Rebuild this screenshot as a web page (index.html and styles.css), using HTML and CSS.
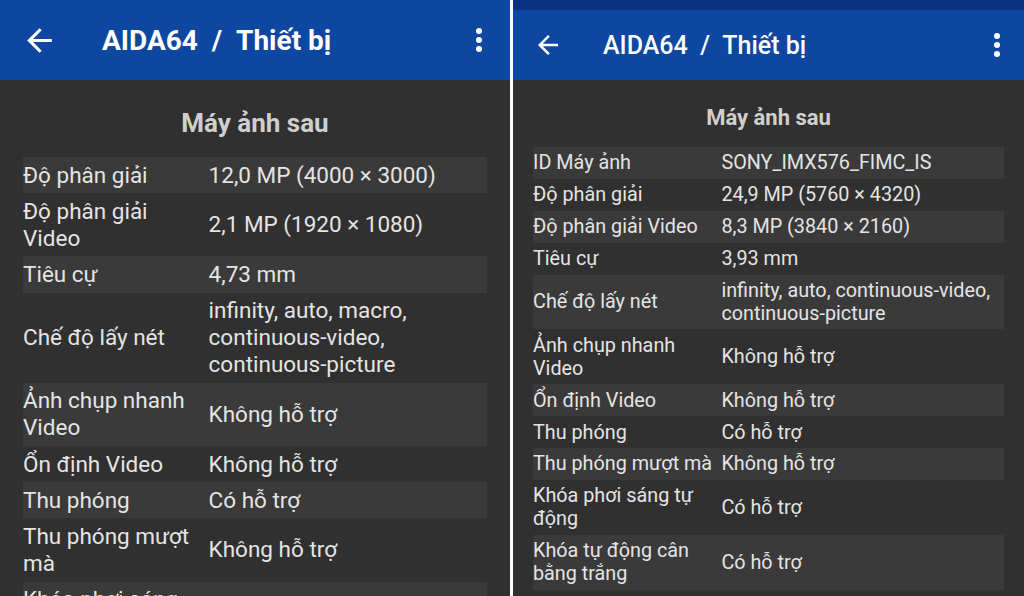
FILE: index.html
```html
<!DOCTYPE html>
<html>
<head>
    <title>AIDA64 - Thiết bị</title>
    <meta charset="utf-8">
    <link rel="stylesheet" href="styles.css">
</head>
<body>
    <div class="shots">

        <!-- LEFT PHONE -->
        <div class="phone phone-big">
            <div class="appbar">
                <svg class="back" viewBox="0 0 24 24"><path d="M20 11H7.83l5.59-5.59L12 4l-8 8 8 8 1.41-1.41L7.83 13H20v-2z"/></svg>
                <div class="appbar-title">AIDA64&nbsp; / &nbsp;Thiết bị</div>
                <svg class="kebab" viewBox="0 0 24 24"><circle cx="12" cy="6" r="2"/><circle cx="12" cy="12" r="2"/><circle cx="12" cy="18" r="2"/></svg>
            </div>
            <div class="content">
                <h2>Máy ảnh sau</h2>
                <table class="info">
                    <tr><td>Độ phân giải</td><td>12,0 MP (4000 × 3000)</td></tr>
                    <tr><td>Độ phân giải Video</td><td>2,1 MP (1920 × 1080)</td></tr>
                    <tr><td>Tiêu cự</td><td>4,73 mm</td></tr>
                    <tr><td>Chế độ lấy nét</td><td>infinity, auto, macro, continuous-video, continuous-picture</td></tr>
                    <tr><td>Ảnh chụp nhanh Video</td><td>Không hỗ trợ</td></tr>
                    <tr><td>Ổn định Video</td><td>Không hỗ trợ</td></tr>
                    <tr><td>Thu phóng</td><td>Có hỗ trợ</td></tr>
                    <tr><td>Thu phóng mượt mà</td><td>Không hỗ trợ</td></tr>
                    <tr><td>Khóa phơi sáng tự động</td><td>Có hỗ trợ</td></tr>
                </table>
            </div>
        </div>

        <div class="divider"></div>

        <!-- RIGHT PHONE -->
        <div class="phone phone-small">
            <div class="statusbar"></div>
            <div class="appbar">
                <svg class="back" viewBox="0 0 24 24"><path d="M20 11H7.83l5.59-5.59L12 4l-8 8 8 8 1.41-1.41L7.83 13H20v-2z"/></svg>
                <div class="appbar-title">AIDA64&nbsp; / &nbsp;Thiết bị</div>
                <svg class="kebab" viewBox="0 0 24 24"><circle cx="12" cy="6" r="2"/><circle cx="12" cy="12" r="2"/><circle cx="12" cy="18" r="2"/></svg>
            </div>
            <div class="content">
                <h2>Máy ảnh sau</h2>
                <table class="info">
                    <tr><td>ID Máy ảnh</td><td>SONY_IMX576_FIMC_IS</td></tr>
                    <tr><td>Độ phân giải</td><td>24,9 MP (5760 × 4320)</td></tr>
                    <tr><td>Độ phân giải Video</td><td>8,3 MP (3840 × 2160)</td></tr>
                    <tr><td>Tiêu cự</td><td>3,93 mm</td></tr>
                    <tr><td>Chế độ lấy nét</td><td>infinity, auto, continuous-video, continuous-picture</td></tr>
                    <tr><td>Ảnh chụp nhanh Video</td><td>Không hỗ trợ</td></tr>
                    <tr><td>Ổn định Video</td><td>Không hỗ trợ</td></tr>
                    <tr><td>Thu phóng</td><td>Có hỗ trợ</td></tr>
                    <tr><td>Thu phóng mượt mà</td><td>Không hỗ trợ</td></tr>
                    <tr><td>Khóa phơi sáng tự động</td><td>Có hỗ trợ</td></tr>
                    <tr><td>Khóa tự động cân bằng trắng</td><td>Có hỗ trợ</td></tr>
                </table>
            </div>
        </div>

    </div>
</body>
</html>
```

FILE: styles.css
```css
body {
    margin: 0;
    background: #ffffff;
    font-family: Roboto, "Noto Sans", Arial, sans-serif;
    color: #e4e4e4;
}

.shots {
    display: flex;
    height: 596px;
    overflow: hidden;
}

.phone {
    background: #303030;
    overflow: hidden;
}

.phone-big {
    width: 510px;
}

.divider {
    width: 3px;
    background: #ffffff;
}

.phone-small {
    flex: 1;
}

/* top bars */
.statusbar {
    height: 10px;
    background: #083180;
}

.appbar {
    display: flex;
    align-items: center;
    background: #0d47a1;
    color: #ffffff;
}

.appbar svg {
    fill: #ffffff;
    flex-shrink: 0;
}

.appbar-title {
    flex: 1;
    white-space: nowrap;
}

.phone-big .appbar {
    height: 80px;
}

.phone-big .back {
    width: 37px;
    height: 37px;
    margin-left: 21px;
}

.phone-big .appbar-title {
    margin-left: 44px;
    font-size: 28px;
    font-weight: bold;
}

.phone-big .kebab {
    width: 36px;
    height: 36px;
    margin-right: 13px;
}

.phone-small .appbar {
    height: 70px;
}

.phone-small .back {
    width: 30px;
    height: 30px;
    margin-left: 20px;
}

.phone-small .appbar-title {
    margin-left: 40px;
    font-size: 25px;
    font-weight: 500;
}

.phone-small .kebab {
    width: 36px;
    height: 36px;
    margin-right: 9px;
}

/* content */
.content h2 {
    margin: 0;
    text-align: center;
    color: #cfcfcf;
    font-weight: bold;
}

.phone-big .content {
    padding: 0 23px;
}

.phone-big h2 {
    font-size: 26px;
    line-height: 40px;
    padding: 23px 0 14px;
}

.phone-small .content {
    padding: 0 20px;
}

.phone-small h2 {
    font-size: 22px;
    line-height: 34px;
    padding: 21px 0 12px;
}

.info {
    width: 100%;
    border-collapse: collapse;
}

.info tr:nth-child(odd) {
    background: #3a3a3a;
}

.info td {
    padding: 0;
    vertical-align: middle;
}

.info td:first-child {
    width: 40%;
}

.phone-big .info td {
    font-size: 22.5px;
    line-height: 27px;
    padding: 4.6px 6px 4.6px 0;
}

.phone-small .info td {
    font-size: 19.8px;
    line-height: 23px;
    padding: 4.45px 4px 4.45px 0;
}
```
